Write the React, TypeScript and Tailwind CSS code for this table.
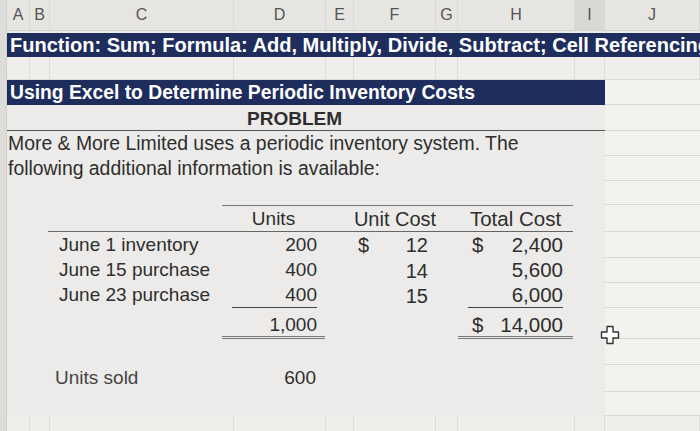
import React from "react";

const COLS: { l: string; w: string; sel?: boolean }[] = [
  { l: "A", w: "w-[23px]" },
  { l: "B", w: "w-[20px]" },
  { l: "C", w: "w-[184px]" },
  { l: "D", w: "w-[92px]" },
  { l: "E", w: "w-[28px]" },
  { l: "F", w: "w-[82px]" },
  { l: "G", w: "w-[22px]" },
  { l: "H", w: "w-[117px]" },
  { l: "I", w: "w-[30px]", sel: true },
  { l: "J", w: "flex-1" },
];

function R({ cls, left, children }: { cls: string; left?: string; children?: React.ReactNode }) {
  return (
    <div className={`flex shrink-0 ${cls}`}>
      <div className={`w-[598px] shrink-0 ${left ?? ""}`}>{children}</div>
      <div className="flex-1 bg-[#f3f2ee] border-b border-[#d9d8d4]" />
    </div>
  );
}

function GridRow({ h }: { h: string }) {
  return (
    <div className={`flex shrink-0 ${h} bg-[#efeeea]`}>
      {COLS.map((c) => (
        <div key={c.l} className={`${c.w} shrink-0 border-r border-b border-[#dcdbd7]`} />
      ))}
    </div>
  );
}

function TRow({
  h,
  label,
  units,
  ucD,
  uc,
  tcD,
  tc,
  underline,
  total,
  labelCls,
}: {
  h: string;
  label?: string;
  units?: string;
  ucD?: string;
  uc?: string;
  tcD?: string;
  tc?: string;
  underline?: boolean;
  total?: boolean;
  labelCls?: string;
}) {
  return (
    <R cls={h} left="flex text-[19px] text-[#2e2e2e]">
      <div className="w-[41px] shrink-0" />
      <div className={`w-[174px] shrink-0 ${labelCls ?? "pl-[11px]"} flex items-center`}>{label}</div>
      {underline ? (
        <div className="w-[103px] shrink-0 pl-[10px] pr-[8px] flex">
          <div className="w-full border-b border-[#444] text-right flex items-center justify-end">{units}</div>
        </div>
      ) : total ? (
        <div className="w-[103px] shrink-0 border-b-[3px] border-double border-[#777] text-right pr-[8px] pt-[6px] leading-[22px]">
          {units}
        </div>
      ) : (
        <div className={`w-[103px] shrink-0 text-right ${labelCls ? "pr-[9px]" : "pr-[8px]"} flex items-center justify-end`}>{units}</div>
      )}
      <div className="w-[25px] shrink-0" />
      <div className="w-[90px] shrink-0 flex justify-between items-center pl-[8px] pr-[12px] text-[20px]">
        <span>{ucD}</span>
        <span>{uc}</span>
      </div>
      <div className="w-[18px] shrink-0" />
      {underline ? (
        <div className="w-[115px] shrink-0 pl-[10px] pr-[10px] flex text-[20.5px]">
          <div className="w-full border-b border-[#444] flex items-center justify-end">{tc}</div>
        </div>
      ) : total ? (
        <div className="w-[115px] shrink-0 border-b-[3px] border-double border-[#777] flex justify-between pl-[14px] pr-[10px] pt-[6px] leading-[22px] text-[20.5px]">
          <span>{tcD}</span>
          <span>{tc}</span>
        </div>
      ) : (
        <div className="w-[115px] shrink-0 flex justify-between items-center pl-[14px] pr-[10px] text-[20.5px]">
          <span>{tcD}</span>
          <span>{tc}</span>
        </div>
      )}
    </R>
  );
}

export default function App() {
  return (
    <div className="w-[700px] h-[431px] overflow-hidden flex bg-[#ecebe9] relative font-['Liberation_Sans',Arial,sans-serif]">
      <div className="w-[7px] shrink-0 bg-[#dddcd9] border-r border-[#cfcecb]" />
      <div className="flex-1 flex flex-col min-w-0">
        {/* column headers */}
        <div className="flex h-[31px] shrink-0 bg-[#e6e5e2] border-b border-[#d2d1cd]">
          {COLS.map((c) => (
            <div
              key={c.l}
              className={`${c.w} shrink-0 flex items-end justify-center pb-[3px] text-[16px] text-[#555] border-r border-[#dad9d5] ${
                c.sel ? "bg-[#d9d8d5]" : ""
              }`}
            >
              {c.l}
            </div>
          ))}
        </div>
        {/* function banner */}
        <div className="h-[26px] shrink-0 pt-[2px]">
          <div className="h-[24px] bg-[#1e2d5c] text-white font-bold text-[20px] leading-[24px] pl-[3px] whitespace-nowrap overflow-hidden">
            Function: Sum; Formula: Add, Multiply, Divide, Subtract; Cell Referencing
          </div>
        </div>
        <GridRow h="h-[23px]" />
        <R cls="h-[25px]" left="bg-[#1e2d5c] text-white font-bold text-[19.3px] leading-[25px] pl-[3px] whitespace-nowrap">
          Using Excel to Determine Periodic Inventory Costs
        </R>
        <R cls="h-[26px]" left="border-b border-[#555] pt-[3px] leading-[22px] font-bold text-[19px] text-[#2e2e2e] pl-[240px]">
          PROBLEM
        </R>
        <R cls="h-[25px]" left="text-[19.4px] leading-[25px] text-[#2e2e2e] pl-[1px] whitespace-nowrap">
          More &amp; More Limited uses a periodic inventory system. The
        </R>
        <R cls="h-[25px]" left="text-[19.4px] leading-[25px] text-[#2e2e2e] pl-[1px] whitespace-nowrap">
          following additional information is available:
        </R>
        <R cls="h-[24px]" />
        {/* table header */}
        <R cls="h-[27px]" left="flex">
          <div className="ml-[41px] w-[525px] flex border-b border-[#666] text-[19px] text-[#2e2e2e]">
            <div className="w-[174px] shrink-0" />
            <div className="flex-1 flex border-t border-[#777] pt-[2px] leading-[22px]">
              <div className="w-[103px] shrink-0 text-center">Units</div>
              <div className="w-[25px] shrink-0" />
              <div className="w-[90px] shrink-0 text-center text-[20px] whitespace-nowrap">Unit Cost</div>
              <div className="w-[18px] shrink-0" />
              <div className="w-[115px] shrink-0 text-center text-[20.5px] whitespace-nowrap">Total Cost</div>
            </div>
          </div>
        </R>
        <TRow h="h-[26px]" label="June 1 inventory" units="200" ucD="$" uc="12" tcD="$" tc="2,400" />
        <TRow h="h-[25px]" label="June 15 purchase" units="400" uc="14" tc="5,600" />
        <TRow h="h-[25px]" label="June 23 purchase" units="400" uc="15" tc="6,000" underline />
        <TRow h="h-[31px]" units="1,000" tcD="$" tc="14,000" total />
        <R cls="h-[26px]" />
        <TRow h="h-[27px]" label="Units sold" units="600" labelCls="pl-[7px] text-[#444]" />
        <R cls="h-[24px]" />
        <GridRow h="h-[30px]" />
      </div>
      {/* cell cursor */}
      <svg className="absolute left-[600px] top-[325px]" width="20" height="20" viewBox="0 0 20 20">
        <path
          d="M7 1.5h6v5.5h5.5v6H13v5.5H7V13H1.5V7H7z"
          fill="#fff"
          stroke="#333"
          strokeWidth="1.4"
          strokeLinejoin="round"
        />
      </svg>
    </div>
  );
}
